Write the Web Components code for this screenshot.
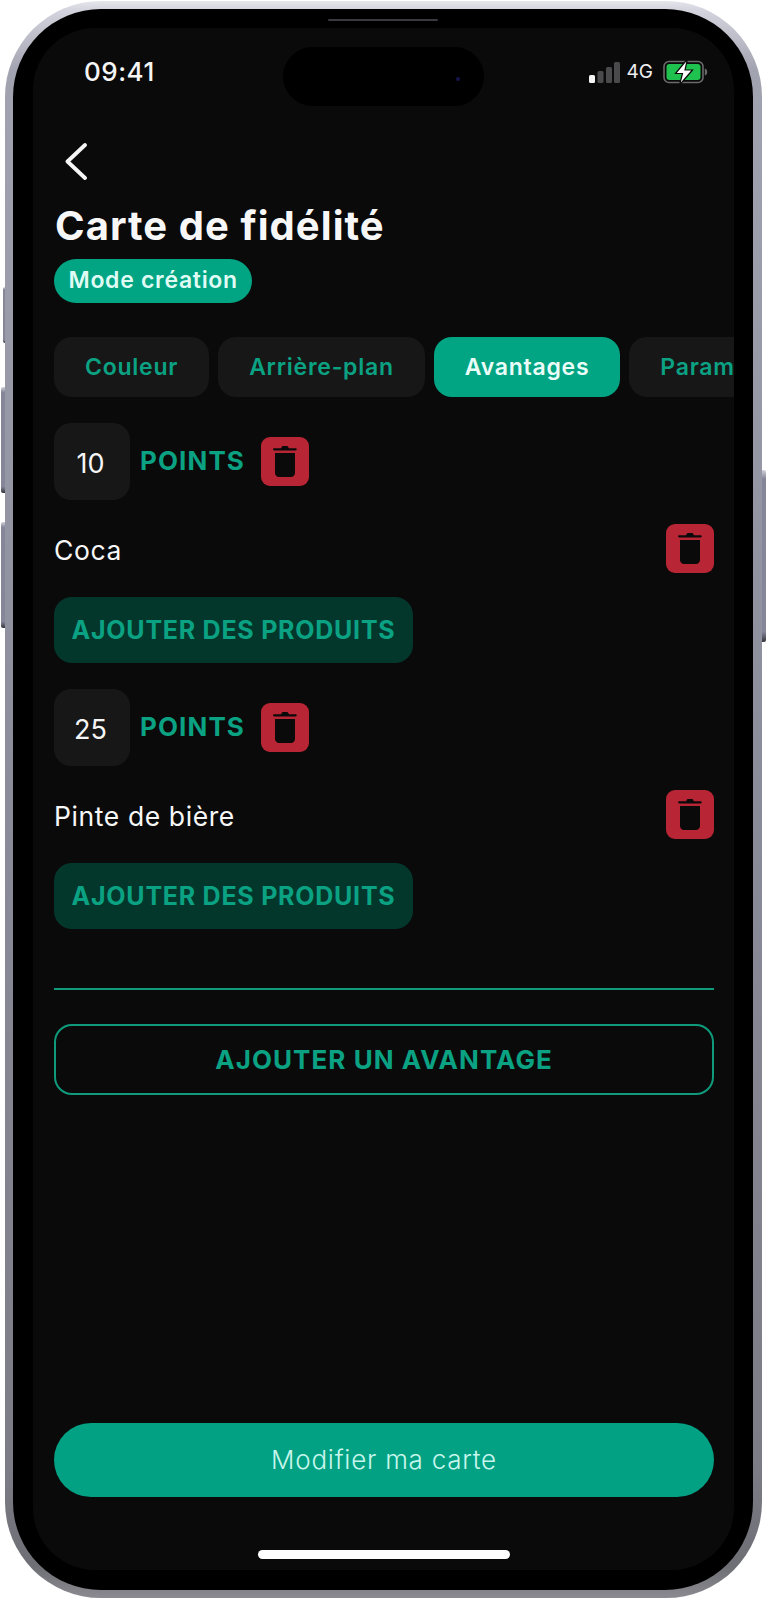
<!DOCTYPE html>
<html lang="fr">
<head>
<meta charset="utf-8">
<title>Carte de fidélité</title>
<style>
  html, body { margin: 0; background: #fff; }
  body { font-family: Inter, "Liberation Sans", sans-serif; color: #fff; width: 767px; height: 1600px; overflow: hidden; }
</style>
</head>
<body>
<phone-frame>
  <status-bar></status-bar>
  <app-header heading="Carte de fidélité" badge="Mode création"></app-header>
  <tab-bar>
    <tab-item>Couleur</tab-item>
    <tab-item>Arrière-plan</tab-item>
    <tab-item active>Avantages</tab-item>
    <tab-item>Paramètres</tab-item>
  </tab-bar>
  <reward-block points="10" product="Coca"></reward-block>
  <reward-block points="25" product="Pinte de bière"></reward-block>
  <add-advantage></add-advantage>
  <primary-button>Modifier ma carte</primary-button>
  <home-bar></home-bar>
</phone-frame>

<script>
function define(name, html) {
  customElements.define(name, class extends HTMLElement {
    connectedCallback() {
      if (this.shadowRoot) return;
      const root = this.attachShadow({ mode: 'open' });
      root.innerHTML = typeof html === 'function' ? html(this) : html;
    }
  });
}

const TRASH = `<svg width="24" height="31" viewBox="0 0 24 31" aria-hidden="true">
  <path fill="#0a0a0b" d="M8.600 1.200C8.900.5 9.500 0 10.300 0h3.400c.8 0 1.400.5 1.700 1.200l.4 1h6.600c.8 0 1.400.5 1.400 1.100s-.6 1.100-1.400 1.100H1.400C.6 4.400 0 3.900 0 3.300s.6-1.100 1.400-1.100H8zM2 7h20v20c0 2.200-1.800 4-4 4H6c-2.200 0-4-1.800-4-4z"/>
</svg>`;

define('phone-frame', `<style>
  :host { display: block; box-sizing: border-box; position: relative; width: 757px; height: 1597px; margin: 1px 5px 2px; padding: 8px 9px 8px 8px;
    border-radius: 96px;
    background: linear-gradient(180deg, #e6e7ec 0, #d4d5de 8px, #a2a3b0 70px, #8b8c9a 50%, #7c7c86 92%, #6e6e75 98%, #8a8a90 100%); }
  .btn { position: absolute; background: linear-gradient(180deg,#d2d3da,#85869a 5%,#85869a 94%,#35353c); }
  .l { left: -4px; width: 4px; border-radius: 2px 0 0 2px; }
  .r { right: -4px; width: 4px; border-radius: 0 2px 2px 0; }
  .bezel { box-sizing: border-box; height: 100%; padding: 19px 19px 20px 20px; background: #000; border-radius: 88px; position: relative; }
  .speaker { position: absolute; left: 315px; top: 10px; width: 110px; height: 2px; border-radius: 1px; background: #3a3a3e; }
  .island { position: absolute; left: 270px; top: 38px; width: 201px; height: 59px; border-radius: 30px; background: #000; }
  .lens { position: absolute; right: 24px; top: 30px; width: 4px; height: 4px; border-radius: 50%; background: #15154d; }
  .screen { box-sizing: border-box; height: 100%; padding: 0 20px 0 21px; background: #0a0a0b; border-radius: 62px; display: flex; flex-direction: column; overflow: hidden; }
</style>
<div class="btn l" style="top:286px;height:56px;left:-2px;width:2px"></div>
<div class="btn l" style="top:386px;height:106px"></div>
<div class="btn l" style="top:521px;height:106px"></div>
<div class="btn r" style="top:469px;height:172px"></div>
<div class="bezel">
  <div class="speaker"></div>
  <div class="screen"><slot></slot></div>
  <div class="island"><div class="lens"></div></div>
</div>`);

define('status-bar', `<style>
  :host { display: flex; align-items: center; justify-content: space-between; flex: none; height: 36px; margin: 26px 6px 0 30px; }
  .time { font: 500 26px/36px Inter, sans-serif; letter-spacing: .5px; color: #f5f5f5; }
  .right { display: flex; align-items: center; gap: 7px; }
  .net { font: 400 19px/20px Inter, sans-serif; color: #eee; }
</style>
<span class="time">09:41</span>
<span class="right">
  <svg width="31" height="21" viewBox="0 0 31 21" aria-hidden="true">
    <rect x="0" y="13" width="6" height="8" rx="1.5" fill="#f5f5f5"/>
    <rect x="8.5" y="9" width="6" height="12" rx="1.5" fill="#4a4a4c"/>
    <rect x="17" y="5" width="6" height="16" rx="1.5" fill="#4a4a4c"/>
    <rect x="25" y="0" width="6" height="21" rx="1.5" fill="#4a4a4c"/>
  </svg>
  <span class="net">4G</span>
  <svg width="45" height="26" viewBox="0 0 45 26" style="margin-left:3px" aria-hidden="true">
    <rect x="1" y="2.500" width="39" height="21" rx="5" fill="none" stroke="#6a6a6a" stroke-width="1.600"/>
    <rect x="3.500" y="5" width="34" height="16" rx="3" fill="#1fc14f"/>
    <path d="M41.800 9.500c1.800.4 2.400 1.800 2.400 3.500s-.6 3.100-2.400 3.500z" fill="#6a6a6a"/>
    <path d="M24.500 0 12.500 14.500h7L16.500 26l13-15h-7.500z" fill="#fff" stroke="#0a0a0b" stroke-width="1.200"/>
  </svg>
</span>`);

define('app-header', el => `<style>
  :host { display: block; flex: none; }
  .back { display: block; margin: 53px 0 0 10px; }
  h1 { margin: 23px 0 0 1px; font: 700 40px/46px Inter, sans-serif; letter-spacing: 1.05px; color: #f7f7f7; }
  .badge { display: inline-block; margin-top: 10px; padding: 0 14.500px; height: 44px; box-sizing: border-box; border-radius: 22px; background: #02a583; font: 600 23px/42px Inter, sans-serif; letter-spacing: .7px; color: #dffbf4; }
</style>
<svg class="back" width="24" height="37" viewBox="0 0 24 37" aria-hidden="true">
  <path d="M21 2 3.500 18.500 21 35" fill="none" stroke="#f5f5f5" stroke-width="3.800" stroke-linecap="round" stroke-linejoin="round"/>
</svg>
<h1>${el.getAttribute('heading')}</h1>
<div><span class="badge">${el.getAttribute('badge')}</span></div>`);

define('tab-bar', `<style>
  :host { display: flex; flex: none; gap: 9px; margin: 34px -20px 0 0; overflow: hidden; }
</style><slot></slot>`);

define('tab-item', `<style>
  :host { display: flex; flex: none; box-sizing: border-box; height: 60px; padding: 0 31px; align-items: center; justify-content: center; border-radius: 18px; background: #171718; font: 600 23px/1 Inter, sans-serif; letter-spacing: .75px; color: #0ba283; white-space: nowrap; }
  :host([active]) { background: #02a583; color: #eafdf8; }
</style><slot></slot>`);

define('trash-button', `<style>
  :host { display: flex; flex: none; width: 48px; height: 49px; align-items: center; justify-content: center; border-radius: 9px; background: #b82534; }
</style>${TRASH}`);

define('reward-block', el => `<style>
  :host { display: block; flex: none; }
  .points { display: flex; align-items: center; margin-top: 26px; height: 77px; }
  .value { box-sizing: border-box; width: 76px; height: 77px; padding: 3px 3px 0 0; display: flex; align-items: center; justify-content: center; border-radius: 17px; background: #171718; font: 400 27px/1 Inter, sans-serif; color: #f5f5f5; }
  .label { margin: -1px 16px 0 10px; font: 700 26px/1 Inter, sans-serif; letter-spacing: 1.1px; color: #0ba283; }
  .product { display: flex; align-items: center; justify-content: space-between; margin-top: 24px; }
  .name { padding-top: 4px; font: 400 26.500px/1 Inter, sans-serif; letter-spacing: .6px; color: #f7f7f7; }
  .add { box-sizing: border-box; width: 359px; height: 66px; margin-top: 24px; display: flex; align-items: center; justify-content: center; border-radius: 18px; background: #04372b; font: 700 25px/1 Inter, sans-serif; letter-spacing: .75px; color: #0ba283; white-space: nowrap; }
</style>
<div class="points">
  <div class="value">${el.getAttribute('points')}</div>
  <div class="label">POINTS</div>
  <trash-button></trash-button>
</div>
<div class="product"><span class="name">${el.getAttribute('product')}</span><trash-button></trash-button></div>
<div class="add">AJOUTER DES PRODUITS</div>`);

define('add-advantage', `<style>
  :host { display: block; flex: none; }
  hr { margin: 59px 0 0; border: 0; height: 2px; background: #0e9a7b; }
  .btn { box-sizing: border-box; height: 71px; margin-top: 34px; display: flex; align-items: center; justify-content: center; border: 2px solid #0e9a7b; border-radius: 18px; font: 700 26px/1 Inter, sans-serif; letter-spacing: 1.05px; color: #0ba283; }
</style>
<hr>
<div class="btn">AJOUTER UN AVANTAGE</div>`);

define('primary-button', `<style>
  :host { display: flex; flex: none; height: 74px; margin-top: auto; align-items: center; justify-content: center; border-radius: 37px; background: #02a183; font: 300 26px/1 Inter, sans-serif; letter-spacing: .75px; color: #c8f6ec; }
</style><slot></slot>`);

define('home-bar', `<style>
  :host { display: block; flex: none; width: 252px; height: 9px; margin: 53px 0 11px 204px; border-radius: 5px; background: #fff; }
</style>`);
</script>
</body>
</html>
